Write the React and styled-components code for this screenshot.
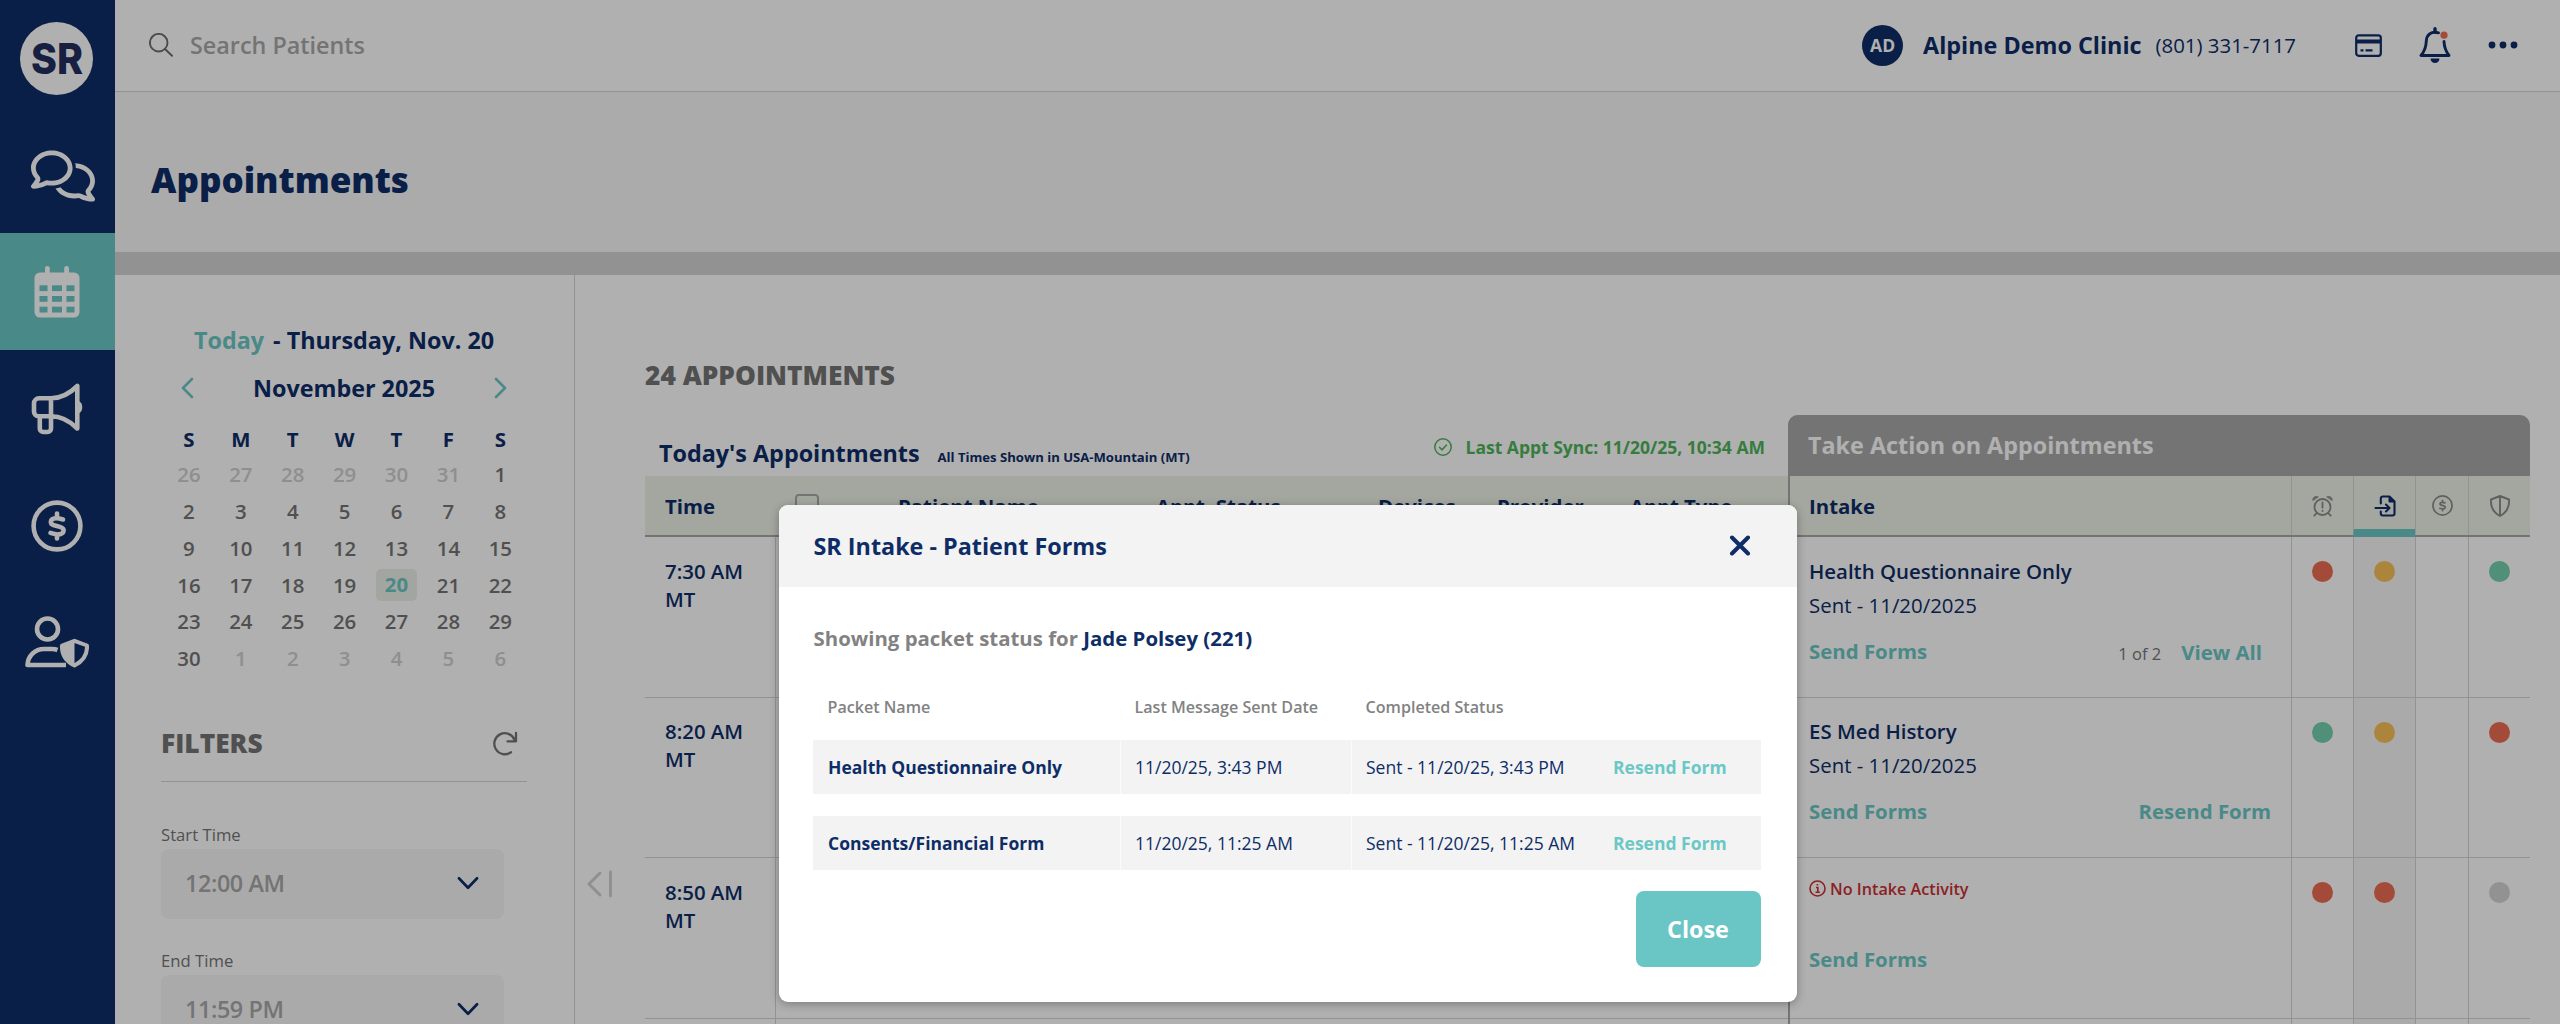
import React from 'react'
import styled, { createGlobalStyle } from 'styled-components'
import { FaRegComments } from 'react-icons/fa6'

const navy = '#0e2d67'
const teal = '#6bc8c5'
const line = '#d4d4d4'

const weekDays = ['S', 'M', 'T', 'W', 'T', 'F', 'S']
const days = [
  26, 27, 28, 29, 30, 31, 1,
  2, 3, 4, 5, 6, 7, 8,
  9, 10, 11, 12, 13, 14, 15,
  16, 17, 18, 19, 20, 21, 22,
  23, 24, 25, 26, 27, 28, 29,
  30, 1, 2, 3, 4, 5, 6,
]

const appointments = [
  { time: '7:30 AM', form: 'Health Questionnaire Only', sent: 'Sent - 11/20/2025', count: '1 of 2', link: 'View All', dots: ['red', 'yellow', null, 'green'] },
  { time: '8:20 AM', form: 'ES Med History', sent: 'Sent - 11/20/2025', link: 'Resend Form', dots: ['green', 'yellow', null, 'red'] },
  { time: '8:50 AM', dots: ['red', 'red', null, 'grey'] },
  { time: '', blank: true, dots: [null, null, null, null] },
]

const packets = [
  { name: 'Health Questionnaire Only', date: '11/20/25, 3:43 PM', status: 'Sent - 11/20/25, 3:43 PM' },
  { name: 'Consents/Financial Form', date: '11/20/25, 11:25 AM', status: 'Sent - 11/20/25, 11:25 AM' },
]

const dotColors = { red: '#ee6c52', yellow: '#fac158', green: '#74cfaf', grey: '#d4d4d4' }

function DollarIcon({ size, weight }) {
  return (
    <svg width={size} height={size} viewBox="0 0 52 52" fill="none" stroke="currentColor" strokeWidth={weight} strokeLinecap="round">
      <circle cx="26" cy="26" r={25.7 - weight / 2} />
      <path d="M32 19.500c-3-.9-5.200-1.400-7.500-1.200-5.800.5-6 5.700-1.500 6.900l6 1.700c5.500 1.700 4.500 7-1.500 7.500-2.500.2-5-.5-8-1.500M26 13.500v4M26 34.500v4" />
    </svg>
  )
}

function CalendarIcon() {
  return (
    <svg width="46" height="52" viewBox="0 0 46 52" fill="#fff">
      <rect x=".5" y="6.500" width="45" height="45" rx="5.500" />
      <rect x="11" y="0" width="4.800" height="12" rx="2.400" />
      <rect x="30.200" y="0" width="4.800" height="12" rx="2.400" />
      {[19.3, 30, 40.7].map((y) => (
        <g key={y} fill={teal}>
          <rect x="5.500" y={y} width="8" height="5.800" />
          <rect x="18" y={y} width="10" height="5.800" />
          <rect x="32.500" y={y} width="8" height="5.800" />
        </g>
      ))}
    </svg>
  )
}

function MegaphoneIcon() {
  return (
    <svg width="52" height="52" viewBox="0 0 52 52" fill="none" stroke="currentColor" strokeWidth="4.600" strokeLinejoin="round" strokeLinecap="round">
      <path d="M20 15.300H8a5 5 0 0 0-5 5v8.500a4.500 4.500 0 0 0 4.500 4.500H20zM20 15.300c10 0 17.500-3.500 26.300-12.300v42.500C37.500 36.700 30 33.300 20 33.300M8.800 34v11.500a3.500 3.500 0 0 0 3.500 3.500h4.200a3.500 3.500 0 0 0 3.500-3.500V33" />
      <path d="M48 19.500c3 1.500 3 8 0 9.500z" fill="currentColor" strokeWidth="2" />
    </svg>
  )
}

function UserShieldIcon() {
  return (
    <svg width="64" height="52" viewBox="0 0 64 52" fill="none" stroke="currentColor" strokeWidth="4.600" strokeLinejoin="round">
      <circle cx="22.500" cy="13" r="10.500" />
      <path d="M32.500 34c-2-.8-3.500-1-5.500-1h-8C10 33 2.800 40 2.500 49H41" />
      <path d="M49.500 24.800L62 29.500c.5 9-3.500 15.500-12.500 20-9-4.500-13-11-12.500-20z" strokeWidth="4" />
      <path d="M49.500 24L36 29.500c0 9 4 16 13.500 21z" fill="currentColor" stroke="none" />
    </svg>
  )
}

function SearchIcon() {
  return (
    <svg width="24" height="24" viewBox="0 0 24 24" fill="none" stroke="#6e6e6e" strokeWidth="1.900" strokeLinecap="round">
      <circle cx="9.700" cy="9.700" r="8.800" />
      <path d="M16 16l7 6.800" />
    </svg>
  )
}

function Chevron({ dir, width, height, weight }) {
  const paths = { left: 'M11 2L2 11l9 9', right: 'M2 2l9 9-9 9', down: 'M2 2l9.500 10L21 2' }
  return (
    <svg width={width} height={height} viewBox={dir === 'down' ? '0 0 23 14' : '0 0 13 22'} fill="none" stroke="currentColor" strokeWidth={weight} strokeLinecap="round" strokeLinejoin="round">
      <path d={paths[dir]} />
    </svg>
  )
}

function RefreshIcon() {
  return (
    <svg width="26" height="25" viewBox="0 0 26 25" fill="none" stroke="#757575" strokeWidth="2.300" strokeLinecap="round" strokeLinejoin="round">
      <path d="M19 21.200a10.500 10.500 0 1 1 3.500-12.500M24 2v8.300h-8.500" />
    </svg>
  )
}

function CardIcon() {
  return (
    <svg width="27" height="23" viewBox="0 0 27 23" fill="none" stroke={navy} strokeWidth="2.200">
      <rect x="1.200" y="1.400" width="24.600" height="20.400" rx="2.500" />
      <path d="M1 7.500h25" strokeWidth="4" />
      <path d="M5.500 16.400h3M10.500 16.400h7" />
    </svg>
  )
}

function BellIcon() {
  return (
    <svg width="32" height="36" viewBox="0 0 32 36" fill="none" stroke={navy} strokeWidth="2.900" strokeLinecap="round" strokeLinejoin="round">
      <path d="M19.500 5.800C12 3.500 7.500 8.500 7.300 14c-.2 6-1 9.500-5.300 14.500h28c-3.500-4.500-4.700-8-5-14" />
      <path d="M16 1.800V5" strokeWidth="3.400" />
      <path d="M11.500 31.500h9a4.500 4.500 0 0 1-9 0z" fill={navy} stroke="none" />
      <circle cx="25" cy="8.200" r="3.600" fill="#ee6c52" stroke="none" />
    </svg>
  )
}

function AlarmIcon() {
  return (
    <svg width="21" height="22" viewBox="0 0 21 22" fill="none" stroke="currentColor" strokeWidth="1.800" strokeLinecap="round">
      <circle cx="10.500" cy="12" r="8" />
      <path d="M10.500 7.500v5.200M10.500 15.700v.3M4.800 18l-2.500 2.700M16.200 18l2.500 2.700" />
      <path d="M.8 5.300C.3 2.500 3.200.5 6 1.800zM20.200 5.300c.5-2.800-2.400-4.800-5.200-3.500z" fill="currentColor" strokeWidth=".8" />
    </svg>
  )
}

function IntakeIcon() {
  return (
    <svg width="22" height="22" viewBox="0 0 22 22" fill="none" stroke={navy} strokeWidth="2.100" strokeLinecap="round" strokeLinejoin="round">
      <path d="M6.800 8.500V3.500a2 2 0 0 1 2-2h6.700l5 5v12a2 2 0 0 1-2 2H8.800a2 2 0 0 1-2-2v-2M1.500 13H15M12 9.500l3.500 3.500-3.500 3.500" />
      <path d="M15 1.500v5.500h5.500z" fill={navy} strokeWidth="1" />
    </svg>
  )
}

function ShieldIcon() {
  return (
    <svg width="22" height="22" viewBox="0 0 22 22" fill="none" stroke="currentColor" strokeWidth="1.900" strokeLinejoin="round">
      <path d="M11 1l9 3.500c.6 7-2.500 13-9 16.500C4.500 17.500 1.400 11.500 2 4.500zM11 1v20" />
    </svg>
  )
}

export default function App() {
  return (
    <Page>
      <GlobalStyle />
      <SideNav>
        <LogoSlot>
          <svg width="73" height="73" viewBox="0 0 73 73">
            <circle cx="36.500" cy="36.500" r="36.500" fill="#fff" />
            <text x="11" y="52" fontFamily="Inter, sans-serif" fontWeight="800" fontSize="43" fill="#222f5e" textLength="52" lengthAdjust="spacingAndGlyphs">SR</text>
          </svg>
        </LogoSlot>
        <NavItem $shift={13} $wide><FaRegComments /></NavItem>
        <NavItem $active><CalendarIcon /></NavItem>
        <NavItem><MegaphoneIcon /></NavItem>
        <NavItem><DollarIcon size={52} weight={4.6} /></NavItem>
        <NavItem><UserShieldIcon /></NavItem>
      </SideNav>
      <Content>
        <TopBar>
          <SearchIcon />
          <SearchText>Search Patients</SearchText>
          <Avatar>AD</Avatar>
          <ClinicName>Alpine Demo Clinic</ClinicName>
          <Phone>(801) 331-7117</Phone>
          <TopIcons>
            <CardIcon />
            <BellIcon />
            <svg width="30" height="8" viewBox="0 0 30 8" fill={navy}>
              <circle cx="4" cy="4" r="3.400" />
              <circle cx="15" cy="4" r="3.400" />
              <circle cx="26" cy="4" r="3.400" />
            </svg>
          </TopIcons>
        </TopBar>
        <TitleBar>Appointments</TitleBar>
        <Body>
          <Filters>
            <TodayLine><span>Today</span> - Thursday, Nov. 20</TodayLine>
            <MonthRow>
              <Chevron dir="left" width={13} height={22} weight={2.6} />
              <MonthName>November 2025</MonthName>
              <Chevron dir="right" width={13} height={22} weight={2.6} />
            </MonthRow>
            <Calendar>
              {weekDays.map((d, i) => <WeekDay key={i}>{d}</WeekDay>)}
              {days.map((d, i) => (
                <Day key={i} $muted={i < 6 || i > 35}>
                  {i === 25 ? <CurrentDay>{d}</CurrentDay> : d}
                </Day>
              ))}
            </Calendar>
            <FiltersHead>
              <SectionTitle>FILTERS</SectionTitle>
              <RefreshIcon />
            </FiltersHead>
            <Label>Start Time</Label>
            <Select>12:00 AM <Chevron dir="down" width={22} height={14} weight={2.8} /></Select>
            <Label>End Time</Label>
            <Select>11:59 PM <Chevron dir="down" width={22} height={14} weight={2.8} /></Select>
          </Filters>
          <Collapse>
            <svg width="26" height="28" viewBox="0 0 26 28" fill="none" stroke="#d0d0d0" strokeWidth="2.900" strokeLinecap="round" strokeLinejoin="round">
              <path d="M13 3L2 14l11 11M23.500 2v24" />
            </svg>
          </Collapse>
          <Main>
            <SectionTitle>24 APPOINTMENTS</SectionTitle>
            <Tables>
              <ListTable>
                <ListTop>
                  <ListTitle>Today's Appointments</ListTitle>
                  <ListNote>All Times Shown in USA-Mountain (MT)</ListNote>
                  <Sync>
                    <svg width="18" height="18" viewBox="0 0 18 18" fill="none" stroke="currentColor" strokeWidth="1.500" strokeLinecap="round">
                      <circle cx="9" cy="9" r="8.200" />
                      <path d="M5.500 9.300l2.500 2.500 4.500-4.800" />
                    </svg>
                    <span>Last Appt Sync: 11/20/25, 10:34 AM</span>
                  </Sync>
                </ListTop>
                <ListHead>
                  <HeadCell $pad={20}>Time</HeadCell>
                  <HeadCell $pad={19}><CheckBox /></HeadCell>
                  <HeadCell>Patient Name</HeadCell>
                  <HeadCell>Appt. Status</HeadCell>
                  <HeadCell>Devices</HeadCell>
                  <HeadCell>Provider</HeadCell>
                  <HeadCell>Appt Type</HeadCell>
                </ListHead>
                {appointments.map((a, i) => (
                  <ListRow key={i}>
                    <TimeCell>{a.time}{a.time && <br />}{a.time && 'MT'}</TimeCell>
                  </ListRow>
                ))}
              </ListTable>
              <ActionTable>
                <ActionTitle>Take Action on Appointments</ActionTitle>
                <ActionHead>
                  <HeadCell $pad={19}>Intake</HeadCell>
                  <IconCell><AlarmIcon /></IconCell>
                  <IconCell $active><IntakeIcon /></IconCell>
                  <IconCell><DollarIcon size={21} weight={4.2} /></IconCell>
                  <IconCell><ShieldIcon /></IconCell>
                </ActionHead>
                {appointments.map((a, i) => (
                  <ActionRow key={i}>
                    <IntakeCell $bottom={a.form ? 32 : 45}>
                      {a.form && <FormName>{a.form}</FormName>}
                      {a.sent && <SentText>{a.sent}</SentText>}
                      {!a.form && !a.blank && (
                        <NoActivity>
                          <svg width="17" height="17" viewBox="0 0 17 17" fill="none" stroke="currentColor" strokeWidth="1.600">
                            <circle cx="8.500" cy="8.500" r="7.500" />
                            <path d="M7 7.500h1.800v4.500M6.500 12.200h4.300M7.600 4.700h1.600" />
                          </svg>
                          No Intake Activity
                        </NoActivity>
                      )}
                      {!a.blank && (
                        <Links $end={a.count ? 29 : 20}>
                          <TealLink>Send Forms</TealLink>
                          {a.count && <Count>{a.count}</Count>}
                          {a.link && <TealLink $low={!!a.count}>{a.link}</TealLink>}
                        </Links>
                      )}
                    </IntakeCell>
                    {a.dots.map((c, j) => (
                      <DotCell key={j} $active={j === 1}>{c && <Dot $color={dotColors[c]} />}</DotCell>
                    ))}
                  </ActionRow>
                ))}
              </ActionTable>
            </Tables>
          </Main>
        </Body>
      </Content>
      <Overlay>
        <Modal>
          <ModalHead>
            SR Intake - Patient Forms
            <svg width="22" height="22" viewBox="0 0 22 22" fill="none" stroke={navy} strokeWidth="4" strokeLinecap="round">
              <path d="M3 2.500l16 16M19 2.500L3 18.500" />
            </svg>
          </ModalHead>
          <ModalText>Showing packet status for <b>Jade Polsey (221)</b></ModalText>
          <PacketHead>
            <span>Packet Name</span>
            <span>Last Message Sent Date</span>
            <span>Completed Status</span>
          </PacketHead>
          {packets.map((p) => (
            <PacketRow key={p.name}>
              <PacketName>{p.name}</PacketName>
              <PacketCell>{p.date}</PacketCell>
              <PacketCell>{p.status}</PacketCell>
              <ResendLink>Resend Form</ResendLink>
            </PacketRow>
          ))}
          <CloseButton>Close</CloseButton>
        </Modal>
      </Overlay>
    </Page>
  )
}

const GlobalStyle = createGlobalStyle`
*{box-sizing:border-box;}
body{
margin:0;
overflow:hidden;
font-family:"Open Sans", sans-serif;
color:${navy};
}
svg{
display:block;
flex-shrink:0;
}
`
const Page = styled.div`
position:relative;
display:flex;
width:2560px;
height:1024px;
overflow:hidden;
background:#fff;
`
const SideNav = styled.nav`
width:115px;
flex-shrink:0;
background:${navy};
`
const LogoSlot = styled.div`
display:flex;
justify-content:center;
height:116.500px;
padding-top:22px;
padding-right:2px;
`
const NavItem = styled.div`
display:flex;
align-items:center;
justify-content:center;
height:116.600px;
padding-top:2px;
padding-right:2px;
padding-left:${p => p.$shift || 0}px;
color:#fff;
background:${p => p.$active ? teal : 'transparent'};
svg{
height:52px;
width:${p => p.$wide ? '64px' : 'auto'};
}
`
const Content = styled.div`
flex:1;
display:flex;
flex-direction:column;
min-width:0;
`
const TopBar = styled.header`
display:flex;
align-items:center;
height:92px;
flex-shrink:0;
padding:0 42px 1px 34px;
border-bottom:1px solid ${line};
`
const SearchText = styled.div`
margin-left:17px;
font-size:23.350px;
font-weight:600;
color:#a8a8a8;
`
const Avatar = styled.div`
display:flex;
align-items:center;
justify-content:center;
width:41px;
height:41px;
margin-left:auto;
border-radius:50%;
background:${navy};
color:#fff;
font-size:17.500px;
font-weight:700;
`
const ClinicName = styled.div`
margin-left:20px;
font-size:23.350px;
font-weight:700;
`
const Phone = styled.div`
margin-left:14px;
font-size:20.400px;
`
const TopIcons = styled.div`
display:flex;
align-items:center;
gap:37px;
margin-left:59px;
`
const TitleBar = styled.h1`
display:flex;
align-items:center;
height:183px;
flex-shrink:0;
margin:0;
padding:14px 0 0 36px;
background:#f8f8f8;
border-bottom:23px solid ${line};
font-size:35px;
font-weight:800;
`
const Body = styled.div`
flex:1;
display:flex;
min-height:0;
`
const Filters = styled.aside`
width:460px;
flex-shrink:0;
padding:49px 47px 0 46px;
border-right:1px solid ${line};
`
const TodayLine = styled.div`
height:32px;
line-height:32px;
text-align:center;
font-size:23.350px;
font-weight:700;
span{
margin-right:3px;
color:${teal};
}
`
const MonthRow = styled.div`
display:flex;
align-items:center;
justify-content:space-between;
height:32px;
margin-top:16px;
padding:0 20px 0 20px;
color:${teal};
`
const MonthName = styled.div`
font-size:23.350px;
font-weight:700;
color:${navy};
`
const Calendar = styled.div`
display:grid;
grid-template-columns:repeat(7, 51.900px);
grid-auto-rows:36.800px;
margin-top:16px;
margin-left:2px;
`
const WeekDay = styled.div`
display:flex;
align-items:center;
justify-content:center;
padding-top:1px;
font-size:20.400px;
font-weight:700;
`
const Day = styled.div`
display:flex;
align-items:center;
justify-content:center;
padding-bottom:2px;
font-size:20.400px;
font-weight:600;
color:${p => p.$muted ? '#cfcfcf' : '#757575'};
`
const CurrentDay = styled.div`
width:41px;
height:32px;
border-radius:5px;
background:#edf1e8;
color:${teal};
line-height:31px;
text-align:center;
font-weight:700;
`
const FiltersHead = styled.div`
display:flex;
align-items:center;
justify-content:space-between;
height:78px;
margin:26px 0 0;
padding:2px 9px 0 0;
border-bottom:1px solid ${line};
`
const SectionTitle = styled.h2`
margin:0;
font-size:26.300px;
line-height:34px;
font-weight:800;
color:#757575;
`
const Label = styled.div`
padding-top:41px;
padding-bottom:2px;
font-size:16.700px;
line-height:24px;
color:#757575;
`
const Select = styled.div`
display:flex;
align-items:center;
justify-content:space-between;
width:343px;
height:70px;
margin-bottom:-11px;
padding:0 25px 1px 24px;
border-radius:8px;
background:#f7f7f7;
color:#a8a8a8;
font-size:23.350px;
line-height:24px;
letter-spacing:-.4px;
font-weight:600;
svg{
color:${navy};
}
& + div{
padding-top:41px;
}
`
const Collapse = styled.div`
width:70px;
flex-shrink:0;
padding:595px 0 0 12px;
`
const Main = styled.main`
flex:1;
padding:83px 30px 0 0;
`
const Tables = styled.div`
display:flex;
margin-top:23px;
`
const ListTable = styled.div`
width:1143px;
`
const ListTop = styled.div`
display:flex;
align-items:center;
height:61px;
padding:0 23px 0 14px;
`
const ListTitle = styled.div`
padding-top:15px;
font-size:23.350px;
font-weight:700;
`
const ListNote = styled.div`
margin-left:18px;
padding-top:22px;
font-size:13.100px;
font-weight:700;
`
const Sync = styled.div`
display:flex;
align-items:center;
gap:14px;
margin-left:auto;
padding-top:2px;
color:#4fb45c;
font-size:17.500px;
font-weight:700;
`
const ListHead = styled.div`
display:grid;
grid-template-columns:131px 122px 258px 222px 119px 133px 158px;
height:61px;
background:#eef2e8;
border-bottom:2px solid #a8a8a8;
`
const HeadCell = styled.div`
display:flex;
align-items:center;
padding-left:${p => p.$pad || 0}px;
font-size:20.400px;
font-weight:700;
`
const CheckBox = styled.div`
width:24px;
height:24px;
border:2px solid #a8a8a8;
border-radius:4px;
`
const ListRow = styled.div`
height:160.500px;
border-bottom:1px solid ${line};
`
const TimeCell = styled.div`
width:131px;
height:100%;
padding:19.500px 0 0 20px;
border-right:1px solid ${line};
font-size:20.400px;
font-weight:600;
line-height:28px;
`
const ActionTable = styled.div`
width:742px;
border-left:2px solid #a8a8a8;
border-radius:10px 0 0 0;
`
const ActionTitle = styled.div`
height:61px;
margin-left:-2px;
padding-left:20px;
border-radius:10px 10px 0 0;
background:#a9a9a9;
color:#fff;
font-size:23.350px;
line-height:61px;
font-weight:700;
`
const ActionHead = styled.div`
display:grid;
grid-template-columns:501px 62px 62px 53px 62px;
height:61px;
background:#eef2e8;
border-bottom:2px solid #a8a8a8;
`
const IconCell = styled.div`
display:flex;
align-items:center;
justify-content:center;
border-left:1px solid ${line};
color:#8b8b8b;
${p => p.$active && `
margin-bottom:-2px;
padding-top:7px;
border-bottom:8px solid ${teal};
`}
`
const ActionRow = styled.div`
display:grid;
grid-template-columns:501px 62px 62px 53px 62px;
height:160.500px;
border-bottom:1px solid ${line};
`
const IntakeCell = styled.div`
display:flex;
flex-direction:column;
padding:19.500px 0 ${p => p.$bottom}px 19px;
`
const FormName = styled.div`
font-size:20.400px;
font-weight:600;
line-height:28px;
`
const SentText = styled.div`
margin-top:6px;
font-size:20.400px;
line-height:28px;
`
const NoActivity = styled.div`
display:flex;
align-items:center;
gap:4px;
margin-top:-1px;
color:#cb2f34;
font-size:16.200px;
font-weight:600;
line-height:24px;
`
const Links = styled.div`
display:flex;
align-items:center;
height:28px;
margin-top:auto;
padding-right:${p => p.$end}px;
`
const TealLink = styled.a`
color:${teal};
font-size:20.400px;
font-weight:700;
line-height:28px;
margin-top:${p => p.$low ? 3 : 0}px;
&:first-child{
margin-right:auto;
}
`
const Count = styled.span`
margin-top:6px;
margin-right:20px;
color:#757575;
font-size:16.500px;
`
const DotCell = styled.div`
display:flex;
justify-content:center;
padding-top:24px;
border-left:1px solid ${line};
background:${p => p.$active ? '#f7f7f7' : 'transparent'};
`
const Dot = styled.div`
width:21px;
height:21px;
border-radius:50%;
background:${p => p.$color};
`
const Overlay = styled.div`
position:absolute;
inset:0;
display:flex;
align-items:flex-start;
padding:505px 0 0 778.500px;
background:rgba(0,0,0,.31);
`
const Modal = styled.div`
display:flex;
flex-direction:column;
width:1018px;
height:496.500px;
border-radius:9px;
background:#fff;
box-shadow:0 2px 10px rgba(0,0,0,.3);
`
const ModalHead = styled.div`
display:flex;
align-items:center;
justify-content:space-between;
height:82px;
padding:0 46px 0 35px;
border-radius:9px 9px 0 0;
background:#f3f3f3;
font-size:23.350px;
font-weight:700;
`
const ModalText = styled.div`
margin:37px 35px 0;
font-size:20.400px;
line-height:28px;
font-weight:700;
color:#828282;
b{
font-weight:700;
color:${navy};
}
`
const PacketHead = styled.div`
display:grid;
grid-template-columns:307px 231px 1fr;
margin:43px 36px 21px 49px;
color:#828282;
font-size:16.100px;
line-height:24px;
font-weight:600;
`
const PacketRow = styled.div`
display:grid;
grid-template-columns:307px 231px 248px 1fr;
height:54px;
margin:0 36px 22px 34.500px;
background:#f3f3f3;
font-size:17.500px;
line-height:54px;
`
const PacketName = styled.div`
padding-left:15px;
font-weight:700;
`
const PacketCell = styled.div`
padding-left:14px;
border-left:1px solid #fafcfc;
`
const ResendLink = styled.a`
padding-left:14px;
color:${teal};
font-weight:700;
`
const CloseButton = styled.button`
align-self:flex-end;
width:125px;
height:76px;
margin:-1px 36px 0 0;
padding-bottom:1px;
border:none;
border-radius:8px;
background:#6ac5c5;
color:#fff;
font-family:inherit;
font-size:23.350px;
font-weight:700;
`
